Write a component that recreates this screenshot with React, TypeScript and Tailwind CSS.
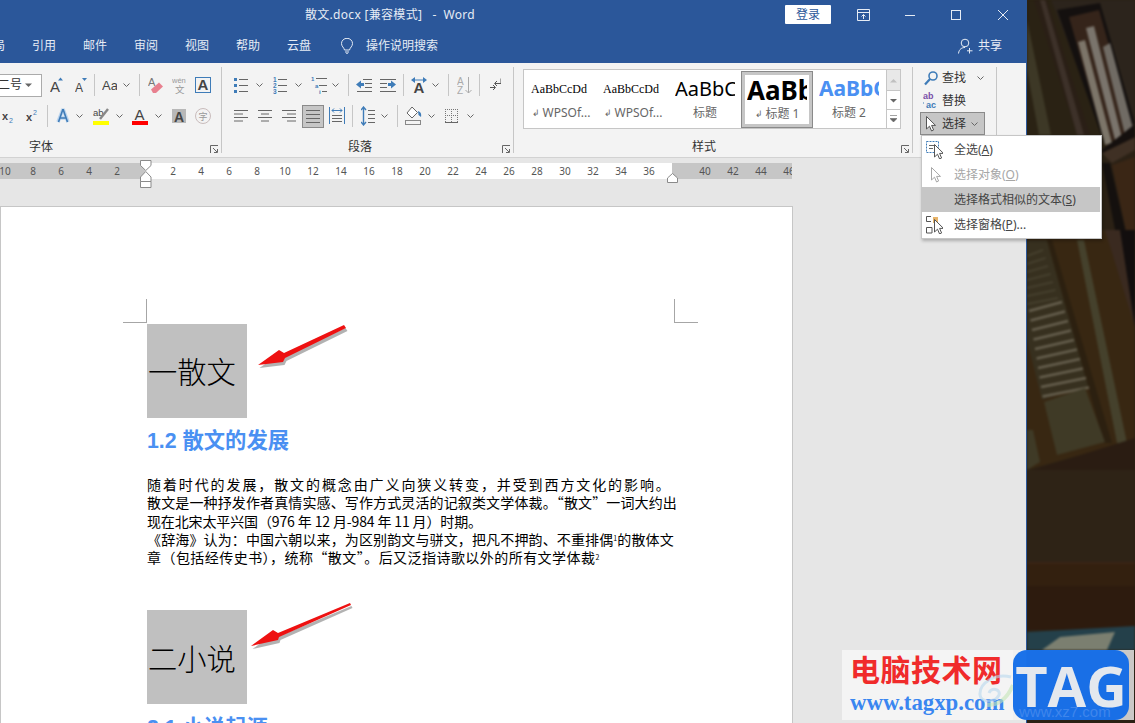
import type { ReactNode } from "react"

function Ic({ w, h = 20, cls = "", children }: { w: number; h?: number; cls?: string; children?: ReactNode }) {
  return (
    <svg width={w} height={h} viewBox={`0 0 ${w} ${h}`} className={`shrink-0 ${cls}`} fill="none">
      {children}
    </svg>
  )
}

function T({ x, y, s, f = "#444", b = false, ff = "Liberation Sans", children }: { x: number; y: number; s: number; f?: string; b?: boolean; ff?: string; children: ReactNode }) {
  return (
    <text x={x} y={y} fontSize={s} fill={f} fontWeight={b ? 700 : 400} fontFamily={`${ff}, Noto Sans CJK SC, sans-serif`}>
      {children}
    </text>
  )
}

const BLUE = "#3f7cb8"

function Chev({ cls = "" }: { cls?: string }) {
  return (
    <Ic w={7} h={20} cls={cls}>
      <path d="M0.5 8.5 3.5 11.5 6.5 8.5" stroke="#666" />
    </Ic>
  )
}

function Sep({ cls = "" }: { cls?: string }) {
  return <div className={`h-[22px] w-px shrink-0 bg-[#c6c6c6] ${cls}`} />
}

function Lines({ w, ys, x = 0, cls = "" }: { w: number; ys: number[]; x?: number; cls?: string }) {
  return (
    <Ic w={w} cls={cls}>
      {ys.map((y) => (
        <path key={y} d={`M${x} ${y + 0.5}H${w}`} stroke="#666" />
      ))}
    </Ic>
  )
}

function AlignIcon({ kind, cls = "" }: { kind: "l" | "c" | "r"; cls?: string }) {
  const rows: [number, number][] =
    kind === "l"
      ? [[0, 14], [0, 9], [0, 14], [0, 9]]
      : kind === "c"
        ? [[0, 14], [3, 11], [0, 14], [3, 11]]
        : [[0, 14], [5, 14], [0, 14], [5, 14]]
  return (
    <Ic w={14} cls={cls}>
      {rows.map((r, i) => (
        <path key={i} d={`M${r[0]} ${4.5 + i * 3.5}H${r[1]}`} stroke="#666" />
      ))}
    </Ic>
  )
}

function Cursor({ x = 0, y = 0, f = "#fff", s = "#555" }: { x?: number; y?: number; f?: string; s?: string }) {
  return <path transform={`translate(${x} ${y})`} d="M0.5 0.5V13L3.5 10.2 5.6 15 7.6 14 5.6 9.4H9.5Z" fill={f} stroke={s} />
}

function Launcher() {
  return (
    <Ic w={8} h={8}>
      <path d="M0.5 8V0.5H8M3 3 7 7M7.5 4V7.5H4" stroke="#666" />
    </Ic>
  )
}

function FontGroup() {
  return (
    <div className="flex w-[221px] shrink-0 flex-col overflow-hidden">
      <div className="mt-[10px] flex h-[24px] items-center">
        <div className="ml-[-10px] flex h-[23px] w-[52px] shrink-0 items-center border border-[#ababab] bg-white pl-[7px] text-[12px] text-[#333]">
          二号
          <Ic w={7} h={6} cls="ml-[3px]">
            <path d="M0 1.5H7L3.5 5Z" fill="#666" />
          </Ic>
        </div>
        <Ic w={13} cls="ml-[8px]">
          <T x={0} y={17} s={15}>A</T>
          <path d="M8 5.5 10.5 2.5 13 5.5Z" fill={BLUE} />
        </Ic>
        <Ic w={12} cls="ml-[12px]">
          <T x={0} y={17} s={12}>A</T>
          <path d="M7 3H12L9.5 6Z" fill={BLUE} />
        </Ic>
        <Sep cls="ml-[7px]" />
        <Ic w={15} cls="ml-[7px]">
          <T x={0} y={15} s={13}>Aa</T>
        </Ic>
        <Chev cls="ml-[6px]" />
        <Sep cls="ml-[9px]" />
        <Ic w={15} cls="ml-[8px]">
          <T x={0} y={11} s={11} f="#777">A</T>
          <path d="M3 14.5 11 7.5 15 11.5 8 18H5Z" fill="#e8808f" />
        </Ic>
        <Ic w={15} cls="ml-[9px]">
          <T x={0} y={8} s={7.5} f="#999">wén</T>
          <T x={3} y={18} s={9.5} f="#999">文</T>
        </Ic>
        <Ic w={16} cls="ml-[8px]">
          <rect x={0.5} y={2.5} width={15} height={15} stroke={BLUE} />
          <T x={2.5} y={15} s={15} b>A</T>
        </Ic>
      </div>
      <div className="mt-[7px] flex h-[24px] items-center">
        <Ic w={12} cls="ml-[2px]">
          <T x={0} y={14} s={11} b>x</T>
          <T x={7} y={17} s={7} f={BLUE}>2</T>
        </Ic>
        <Ic w={12} cls="ml-[12px]">
          <T x={0} y={15} s={11} b>x</T>
          <T x={7} y={9} s={7} f={BLUE}>2</T>
        </Ic>
        <Sep cls="ml-[9px]" />
        <Ic w={14} cls="ml-[8px]">
          <path d="M7 3 2 16M7 3 12 16M4 12H10" stroke="#bcd5ee" strokeWidth={3.5} />
          <path d="M7 3 2.5 16M7 3 11.5 16M4 12H10" stroke={BLUE} strokeWidth={1.6} />
        </Ic>
        <Chev cls="ml-[6px]" />
        <Ic w={16} cls="ml-[10px]">
          <T x={0} y={10} s={9.5}>ab</T>
          <path d="M7 13 15 3" stroke="#888" strokeWidth={2.4} />
          <rect x={0} y={15} width={16} height={4} fill="#ffff00" />
        </Ic>
        <Chev cls="ml-[7px]" />
        <Ic w={16} cls="ml-[9px]">
          <T x={2.5} y={14} s={15}>A</T>
          <rect x={0} y={15} width={16} height={4} fill="#f00" />
        </Ic>
        <Chev cls="ml-[7px]" />
        <Ic w={14} cls="ml-[10px]">
          <rect x={0} y={3} width={14} height={14} fill="#b8b8b8" />
          <T x={2} y={15.5} s={14} b>A</T>
        </Ic>
        <Ic w={16} cls="ml-[9px]">
          <circle cx={8} cy={10} r={7.5} stroke="#c9bcbc" />
          <T x={3.5} y={14} s={9} f="#999">字</T>
        </Ic>
      </div>
      <div className="relative mt-auto flex h-[20px] items-center">
        <span className="ml-[29px] text-[12px] text-[#333]">字体</span>
        <div className="absolute left-[210px] top-[8px]">
          <Launcher />
        </div>
      </div>
    </div>
  )
}

function ParagraphGroup() {
  return (
    <div className="flex w-[291px] shrink-0 flex-col">
      <div className="mt-[10px] flex h-[24px] items-center">
        <Ic w={14} cls="ml-[12px]">
          <path d="M5 4.5H14M5 10.5H14M5 16.5H14" stroke="#666" />
          <path d="M0 3h3v3H0zM0 9h3v3H0zM0 15h3v3H0z" fill={BLUE} />
        </Ic>
        <Chev cls="ml-[8px]" />
        <Ic w={14} cls="ml-[10px]">
          <path d="M5 4.5H14M5 10.5H14M5 16.5H14" stroke="#666" />
          <T x={0} y={7} s={6.5} f={BLUE} b>1</T>
          <T x={0} y={13} s={6.5} f={BLUE} b>2</T>
          <T x={0} y={19} s={6.5} f={BLUE} b>3</T>
        </Ic>
        <Chev cls="ml-[8px]" />
        <Ic w={16} cls="ml-[9px]">
          <path d="M5 3.5H16M8 10.5H16M11 16.5H16" stroke="#666" />
          <T x={0} y={6} s={6} f={BLUE} b>1</T>
          <T x={4} y={12.5} s={6} f={BLUE} b>a</T>
          <T x={8} y={19} s={6} f={BLUE} b>i</T>
        </Ic>
        <Chev cls="ml-[5px]" />
        <Sep cls="ml-[9px]" />
        <Ic w={16} cls="ml-[7px]">
          <path d="M7 4.5H16M9 8.5H16M9 12.5H16M1 16.5H16" stroke="#666" />
          <path d="M0 9.5 5 5.5V8H8V11H5V13.5Z" fill={BLUE} />
        </Ic>
        <Ic w={16} cls="ml-[8px]">
          <path d="M0 4.5H16M0 8.5H7M0 12.5H7M0 16.5H16" stroke="#666" />
          <path d="M16 9.5 11 5.5V8H8V11H11V13.5Z" fill={BLUE} />
        </Ic>
        <Sep cls="ml-[7px]" />
        <Ic w={16} cls="ml-[7px]">
          <T x={2.5} y={18} s={15} b>A</T>
          <path d="M0 5 4 2V8ZM16 5 12 2V8Z" fill={BLUE} />
          <path d="M4 5H12" stroke={BLUE} />
        </Ic>
        <Chev cls="ml-[5px]" />
        <Sep cls="ml-[9px]" />
        <Ic w={15} cls="ml-[8px]">
          <T x={0} y={10} s={10} f="#aaa">A</T>
          <T x={0} y={19} s={10} f="#aaa">Z</T>
          <path d="M11.5 2V18M8.5 15 11.5 18 14.5 15" stroke="#aaa" />
        </Ic>
        <Sep cls="ml-[7px]" />
        <Ic w={11} cls="ml-[10px]">
          <path d="M11 3.5V8.5H5M7 6 4.5 8.5 7 11" stroke="#555" />
          <path d="M0 12.5H5M3 10 5.5 12.5 3 15" stroke="#555" />
        </Ic>
      </div>
      <div className="mt-[7px] flex h-[24px] items-center">
        <AlignIcon kind="l" cls="ml-[12px]" />
        <AlignIcon kind="c" cls="ml-[10px]" />
        <AlignIcon kind="r" cls="ml-[10px]" />
        <div className="ml-[6px] flex h-[23px] w-[22px] shrink-0 items-center justify-center border border-[#8a8a8a] bg-[#c6c6c6]">
          <Lines w={14} ys={[4, 8, 12, 16]} />
        </div>
        <Ic w={16} cls="ml-[5px]">
          <path d="M0.5 1V18M15.5 1V18" stroke={BLUE} />
          <path d="M3 4.5H13M5 2.5 3 4.5 5 6.5M11 2.5 13 4.5 11 6.5" stroke={BLUE} />
          <path d="M3 9.5H13M3 12.5H13M3 15.5H13" stroke="#666" />
        </Ic>
        <Sep cls="ml-[7px]" />
        <Ic w={14} cls="ml-[8px]">
          <path d="M7 4.5H14M7 8.5H14M7 12.5H14M7 16.5H14" stroke="#666" />
          <path d="M2.5 1V19M0 4 2.5 1 5 4M0 16 2.5 19 5 16" stroke={BLUE} strokeWidth={1.4} />
        </Ic>
        <Chev cls="ml-[6px]" />
        <Sep cls="ml-[9px]" />
        <Ic w={17} cls="ml-[7px]">
          <path d="M7 1 12.5 6.5 7 12 2 7Z" fill="#fff" stroke="#666" />
          <path d="M13 5C16 6 16.500 8 16 11L13.500 9Z" fill={BLUE} />
          <rect x={0.5} y={14.5} width={15} height={4} stroke="#888" fill="#f3f3f3" />
        </Ic>
        <Chev cls="ml-[6px]" />
        <Ic w={13} cls="ml-[10px]">
          <path d="M0.5 3V16M6.500 3V16M12.500 3V16M0 3.500H13M0 9.500H13" stroke="#777" strokeDasharray="1 1" />
          <path d="M0 16.500H13" stroke="#666" />
        </Ic>
        <Chev cls="ml-[9px]" />
      </div>
      <div className="relative mt-auto flex h-[20px] items-center">
        <span className="ml-[126px] text-[12px] text-[#333]">段落</span>
        <div className="absolute left-[280px] top-[8px]">
          <Launcher />
        </div>
      </div>
    </div>
  )
}

function StyleItem({ name, mark, active, children }: { name: string; mark?: boolean; active?: boolean; children: ReactNode }) {
  return (
    <div className={`flex h-[57px] w-[72px] shrink-0 flex-col items-center overflow-hidden ${active ? "border border-[#8a8a8a] outline-[3px] outline-[#c6c6c6] -outline-offset-4" : ""}`}>
      <div className="flex h-[33px] w-[60px] items-center overflow-hidden whitespace-nowrap pt-[3px]">{children}</div>
      <div className="flex h-[18px] items-center whitespace-nowrap text-[12px] leading-none text-[#666]">
        {mark && <span className="mr-[3px] text-[9px]">↲</span>}
        {name}
      </div>
    </div>
  )
}

function StylesGroup() {
  return (
    <div className="relative flex w-[398px] shrink-0 flex-col">
      <div className="ml-[9px] mt-[6px] flex h-[60px] w-[378px] border border-[#c6c6c6] bg-white">
        <div className="flex flex-1 items-center pl-[1px]">
          <StyleItem name="WPSOf..." mark>
            <span className="text-[12px] leading-none text-black [font-family:'Liberation_Serif',serif]">AaBbCcDd</span>
          </StyleItem>
          <StyleItem name="WPSOf..." mark>
            <span className="text-[12px] leading-none text-black [font-family:'Liberation_Serif',serif]">AaBbCcDd</span>
          </StyleItem>
          <StyleItem name="标题">
            <span className="text-[20px] leading-none text-black">AaBbC</span>
          </StyleItem>
          <StyleItem name="标题 1" mark active>
            <span className="text-[26px] font-bold leading-none text-black">AaBb</span>
          </StyleItem>
          <StyleItem name="标题 2">
            <span className="text-[21px] font-bold leading-none text-[#4a90f2]">AaBbC</span>
          </StyleItem>
        </div>
        <div className="flex w-[14px] shrink-0 flex-col border-l border-[#c6c6c6]">
          <div className="flex h-[21px] items-center justify-center border-b border-[#c6c6c6] bg-[#e8e8e8]">
            <Ic w={7} h={5}><path d="M0 4.500H7L3.500 1Z" fill="#c0c0c0" /></Ic>
          </div>
          <div className="flex h-[19px] items-center justify-center border-b border-[#c6c6c6]">
            <Ic w={7} h={5}><path d="M0 1H7L3.500 4.500Z" fill="#666" /></Ic>
          </div>
          <div className="flex flex-1 items-center justify-center">
            <Ic w={7} h={8}><path d="M0 3.500H7L3.500 7ZM0 .5H7" fill="#666" stroke="#666" strokeWidth={0.6} /></Ic>
          </div>
        </div>
      </div>
      <div className="mt-auto flex h-[20px] items-center pr-[18px]">
        <span className="w-full text-center text-[12px] text-[#333]">样式</span>
      </div>
      <div className="absolute left-[387px] top-[82px]">
        <Launcher />
      </div>
    </div>
  )
}

function EditGroup() {
  return (
    <div className="flex w-[83px] shrink-0 flex-col pl-[7px] pt-[3px] text-[12px] text-[#333]">
      <div className="flex h-[23px] items-center">
        <Ic w={14} h={16} cls="ml-[4px]">
          <circle cx={9} cy={6} r={4} stroke="#3f7cb8" strokeWidth={1.6} />
          <path d="M6 9 1 14.500" stroke="#3f7cb8" strokeWidth={2.2} />
        </Ic>
        <span className="ml-[4px]">查找</span>
        <Chev cls="ml-[11px]" />
      </div>
      <div className="flex h-[23px] items-center">
        <Ic w={15} h={17} cls="ml-[3px]">
          <T x={0} y={7} s={9} f="#7a4fa8" b>ab</T>
          <T x={3} y={16} s={9} f={BLUE} b>ac</T>
          <path d="M0 12V10" stroke={BLUE} />
        </Ic>
        <span className="ml-[4px]">替换</span>
      </div>
      <div className="flex h-[23px] w-[65px] items-center border border-[#8a8a8a] bg-[#c6c6c6]">
        <Ic w={10} h={16} cls="ml-[5px]">
          <Cursor />
        </Ic>
        <span className="ml-[6px]">选择</span>
        <Chev cls="ml-[5px]" />
      </div>
    </div>
  )
}

function GroupLine() {
  return <div className="my-[4px] w-px shrink-0 bg-[#c6c6c6]" />
}

function RulerCells({ nums }: { nums: (number | null)[] }) {
  return (
    <>
      {nums.map((n, i) => (
        <span key={i} className="w-[28px] shrink-0 text-center">
          {n}
        </span>
      ))}
    </>
  )
}

function Ruler() {
  return (
    <div className="relative h-[48px] shrink-0 pt-[5px]">
      <div className="flex h-[16px] w-[792px] overflow-hidden text-[10px] leading-[16px] text-[#555]">
        <div className="flex w-[145px] shrink-0 bg-[#c6c6c6] pl-0">
          <div className="ml-[-9px] flex">
            <RulerCells nums={[10, 8, 6, 4, 2]} />
          </div>
        </div>
        <div className="flex w-[527px] shrink-0 bg-white pl-[14px]">
          <RulerCells nums={[2, 4, 6, 8, 10, 12, 14, 16, 18, 20, 22, 24, 26, 28, 30, 32, 34, 36]} />
        </div>
        <div className="flex w-[120px] shrink-0 bg-[#c6c6c6] pl-[19px]">
          <RulerCells nums={[40, 42, 44, 46]} />
        </div>
      </div>
      <svg width={12} height={28} viewBox="0 0 12 28" className="absolute left-[140px] top-[2px]" fill="#fff" stroke="#8a8a8a">
        <path d="M.5.5H11V5.500L5.750 10.500.5 5.500Z" />
        <path d="M5.750 11.500 11 17V21.500H.5V17Z" />
        <path d="M.5 21.500H11V27.500H.5Z" />
      </svg>
      <svg width={12} height={10} viewBox="0 0 12 10" className="absolute left-[667px] top-[15px]" fill="#fff" stroke="#8a8a8a">
        <path d="M5.500.5 10.500 5V9.500H.5V5Z" />
      </svg>
    </div>
  )
}

function Page() {
  return (
    <div className="relative h-[600px] w-[793px] border-x border-t border-[#c6c6c6] bg-white pl-[146px] pt-[117px] text-black [font-family:'Noto_Sans_CJK_SC',sans-serif]">
      <div className="absolute left-[122px] top-[92px] h-[24px] w-[24px] border-b border-r border-[#a6a6a6]" />
      <div className="absolute left-[673px] top-[92px] h-[24px] w-[24px] border-b border-l border-[#a6a6a6]" />
      <div className="flex h-[94px] w-[100px] items-center bg-[#c0c0c0] pl-[1px] text-[29.300px] leading-none whitespace-nowrap font-light">一散文</div>
      <div className="mt-[8px] h-[30px] text-[21.300px] font-bold leading-[30px] text-[#4a90f2] whitespace-nowrap [font-family:'Liberation_Sans','Noto_Sans_CJK_SC',sans-serif]">1.2 散文的发展</div>
      <div className="mt-[19px] text-[14px] leading-[18.300px] whitespace-nowrap">
        <div className="tracking-[1.900px]">随着时代的发展，散文的概念由广义向狭义转变，并受到西方文化的影响。</div>
        <div className="tracking-[0.130px]">散文是一种抒发作者真情实感、写作方式灵活的记叙类文学体裁。“散文”一词大约出</div>
        <div className="tracking-[-0.130px]">现在北宋太平兴国（976 年 12 月-984 年 11 月）时期。</div>
        <div className="tracking-[0.130px]">《辞海》认为：中国六朝以来，为区别韵文与骈文，把凡不押韵、不重排偶<sup className="text-[7px]">1</sup>的散体文</div>
        <div className="tracking-[0.450px]">章（包括经传史书），统称“散文”。后又泛指诗歌以外的所有文学体裁<sup className="text-[7px]">2</sup></div>
      </div>
      <div className="mt-[44px] flex h-[94px] w-[100px] items-center bg-[#c0c0c0] pl-[1px] text-[29.300px] leading-none whitespace-nowrap font-light">二小说</div>
      <div className="mt-[9px] h-[30px] text-[21.300px] font-bold leading-[30px] text-[#4a90f2] whitespace-nowrap [font-family:'Liberation_Sans','Noto_Sans_CJK_SC',sans-serif]">2.1 小说起源</div>
    </div>
  )
}

function Wallpaper() {
  const louvers = Array.from({ length: 10 }, (_, i) => i)
  const dimLouvers = Array.from({ length: 7 }, (_, i) => i)
  return (
    <div className="h-[723px] w-[108px] shrink-0 overflow-hidden bg-[#2c2114]">
      <svg width={108} height={723} viewBox="0 0 108 723" className="blur-[0.8px]">
        <rect width={108} height={723} fill="#2b2115" />
        {/* books on the shelf */}
        <path d="M0 0H30L78 145V240H0Z" fill="#2a2214" />
        <path d="M0 20 24 135H12L0 70Z" fill="#3d3826" />
        <path d="M7 0H20L63 135H50Z" fill="#2a1f16" />
        <path d="M13 0H18L57 135H50Z" fill="#3d3129" />
        <path d="M24 0H72L108 0V135H78Z" fill="#2c241c" />
        <path d="M30 10 73 3 108 123 77 143Z" fill="#14100f" />
        <path d="M42 17 72 10 107 133 78 143Z" fill="#35241a" />
        <path d="M51 42 58 40 85 143 78 145Z" fill="#7c7569" />
        <path d="M59 28 67 26 95 138 88 140Z" fill="#7a746c" />
        <path d="M76 47 83 43 107 132 98 135Z" fill="#706b64" />
        <path d="M75 153 108 137V150L85 163Z" fill="#3f3024" />
        <path d="M75 150 108 124V137L75 153Z" fill="#15100e" />
        <path d="M75 163H83L103 250H92Z" fill="#14100e" />
        <path d="M85 165 108 157V250H103Z" fill="#3a2615" />
        {/* louvre door and frame */}
        <path d="M0 230H108V440L0 470Z" fill="#382712" />
        <path d="M0 240H20L62 386 15 400 0 340Z" fill="#37301f" />
        <path d="M50 240H57L100 443H90Z" fill="#45412c" />
        <path d="M20 240H25L85 443H77Z" fill="#2c2010" />
        <path d="M78 230H93L108 287V327Z" fill="#3a2a20" />
        <path d="M93 230H108V327Z" fill="#120e0e" />
        {dimLouvers.map((i) => (
          <path key={i} d={`M0 ${256 + i * 8}L${16 + i * 2.5} ${250 + i * 8}`} stroke="#4a4432" strokeWidth={1.500} />
        ))}
        {louvers.map((i) => (
          <path key={i} d={`M${2 + i * 1.500} ${311 + i * 9.500}L${35 + i * 3} ${302 + i * 9.500}`} stroke="#665f4e" strokeWidth={2.500} />
        ))}
        <path d="M17 402 58 388 78 442 30 455Z" fill="#3f3a26" />
        <path d="M0 430H6L13 462 0 470Z" fill="#3f3a26" />
        <path d="M0 472 108 438V470H0Z" fill="#2a1c12" />
        {/* floor */}
        <rect y={470} width={108} height={160} fill="#2e2316" />
        <rect y={562} width={108} height={2} fill="#3a2415" />
        <rect y={564} width={108} height={22} fill="#33200f" />
        <rect y={586} width={108} height={44} fill="#2d1b0e" />
        <path d="M0 632 108 626V650H0Z" fill="#24404a" />
        <path d="M15 650 33 637 88 632 80 650Z" fill="#7b7f70" />
      </svg>
    </div>
  )
}

function Menu() {
  return (
    <div className="absolute left-[921px] top-[135px] h-[104px] w-[181px] border border-[#c6c6c6] bg-white py-px text-[12px] text-[#444] shadow-[1px_2px_3px_rgba(0,0,0,0.25)]">
      <div className="flex h-[25px] items-center">
        <Ic w={17} h={18} cls="ml-[4px]">
          <rect x={0.5} y={0.5} width={12} height={11} stroke={BLUE} strokeDasharray="2 1" />
          <path d="M3 4.500H9M3 7.500H7" stroke="#666" />
          <Cursor x={8} y={3} />
        </Ic>
        <span className="ml-[11px]">全选(<u>A</u>)</span>
      </div>
      <div className="flex h-[25px] items-center text-[#a6a6a6]">
        <Ic w={10} h={16} cls="ml-[9px]">
          <Cursor s="#a6a6a6" />
        </Ic>
        <span className="ml-[13px]">选择对象(<u>O</u>)</span>
      </div>
      <div className="flex h-[25px] w-[178px] items-center bg-[#c6c6c6] pl-[32px]">选择格式相似的文本(<u>S</u>)</div>
      <div className="flex h-[25px] items-center">
        <Ic w={17} h={18} cls="ml-[4px]">
          <path d="M5 .5H.5V5.500H5M.5 11.500H6V17H.5Z" stroke="#555" />
          <rect x={7} y={1} width={5} height={6} fill="#e8b46a" />
          <Cursor x={8} y={3} />
        </Ic>
        <span className="ml-[11px]">选择窗格(<u>P</u>)...</span>
      </div>
    </div>
  )
}

function Watermark() {
  return (
    <div className="absolute left-[842px] top-[650px] flex h-[70px] w-[292px] bg-[#f3f3f3]/80">
      <div className="relative w-[171px] shrink-0 bg-[#f4f4f4] pl-[8px] pt-[2px]">
        <div className="text-[30px] font-bold leading-[36px] tracking-[0.500px] text-[#f02b2b] whitespace-nowrap">电脑技术网</div>
        <div className="mt-[3px] text-[22.800px] font-bold leading-[24px] text-[#3a86f0] [font-family:'Liberation_Serif',serif] whitespace-nowrap">www.tagxp.com</div>
        <svg width={36} height={34} viewBox="0 0 36 34" className="absolute left-[135px] top-[23px] opacity-60" fill="none">
          <path d="M34 4C18 0 2 10 3 22 4 30 18 30 22 22 24 16 14 14 12 20" stroke="#b9d8ee" strokeWidth={3} />
          <path d="M36 12C30 26 22 32 10 32" stroke="#c5e6b8" strokeWidth={4} />
        </svg>
      </div>
      <div className="absolute left-[171px] top-0 flex h-[70px] w-[116px] items-center justify-center overflow-hidden rounded-[14px] bg-[#0f6ae8]/95 text-[56px] font-bold leading-none text-[#e4e8ee] [font-family:'Open_Sans','Liberation_Sans',sans-serif]">
        TAG
        <span className="absolute bottom-[1px] left-[6px] text-[15px] font-normal leading-none text-[#3f86ec] [font-family:'Liberation_Sans',sans-serif] whitespace-nowrap">www.xz7.com</span>
      </div>
    </div>
  )
}

export default function App() {
  return (
    <div className="relative flex h-[723px] w-[1135px] overflow-hidden [font-family:'Noto_Sans','Noto_Sans_CJK_SC',sans-serif]">
      <div className="flex w-[1027px] shrink-0 flex-col overflow-hidden border-r border-[#2b579a] bg-[#e6e6e6]">
        {/* title bar */}
        <div className="flex h-[29px] shrink-0 items-center bg-[#2b579a] text-[12px] text-[#e6ecf5]">
          <span className="ml-[305px] whitespace-pre tracking-[0.300px]">散文.docx [兼容模式]   -  Word</span>
          <div className="ml-auto flex items-center pr-[18px]">
            <div className="flex h-[19px] w-[46px] items-center justify-center rounded-[1px] bg-white text-[#2b579a]">登录</div>
            <Ic w={13} h={12} cls="ml-[26px]">
              <path d="M.5.5H12.500V11.500H.5ZM.5 3.500H12.500M6.500 10V5.500M4.500 7.500 6.500 5.500 8.500 7.500" stroke="#e6ecf5" />
            </Ic>
            <Ic w={10} h={12} cls="ml-[35px]">
              <path d="M0 6.500H10" stroke="#e6ecf5" />
            </Ic>
            <Ic w={10} h={12} cls="ml-[36px]">
              <rect x={0.5} y={1.500} width={9} height={9} stroke="#e6ecf5" />
            </Ic>
            <Ic w={10} h={12} cls="ml-[37px]">
              <path d="M0 1 10 11M10 1 0 11" stroke="#e6ecf5" />
            </Ic>
          </div>
        </div>
        {/* tabs */}
        <div className="flex h-[34px] shrink-0 items-center gap-[27px] bg-[#2b579a] text-[12px] text-[#e6ecf5]">
          <span className="ml-[-7px]">局</span>
          <span>引用</span>
          <span>邮件</span>
          <span>审阅</span>
          <span>视图</span>
          <span>帮助</span>
          <span>云盘</span>
          <div className="ml-[3px] flex items-center">
            <Ic w={12} h={16}>
              <path d="M3.500 12C3 9.500.5 8.500.5 5.500a5.500 5.200 0 0 1 11 0C11.500 8.500 9 9.500 8.500 12ZM4 14H8M5 15.800H7" stroke="#e6ecf5" />
            </Ic>
            <span className="ml-[13px]">操作说明搜索</span>
          </div>
          <div className="ml-auto flex items-center pr-[24px]">
            <Ic w={15} h={16}>
              <circle cx={7} cy={5} r={3.800} stroke="#e6ecf5" />
              <path d="M.5 15.500C1 11 4 9.500 7 9.500M11.500 10V15.500M9 12.800H14.500" stroke="#e6ecf5" />
            </Ic>
            <span className="ml-[5px]">共享</span>
          </div>
        </div>
        {/* ribbon */}
        <div className="flex h-[95px] shrink-0 border-b border-[#d2d2d2] bg-[#f3f3f3]">
          <FontGroup />
          <GroupLine />
          <ParagraphGroup />
          <GroupLine />
          <StylesGroup />
          <GroupLine />
          <EditGroup />
          <GroupLine />
        </div>
        <Ruler />
        <Page />
      </div>
      <Wallpaper />
      {/* red callout arrows drawn over the document */}
      <svg width={1135} height={723} viewBox="0 0 1135 723" className="pointer-events-none absolute left-0 top-0">
        <path d="M344 325 284 353 279 350 258 365 283 362 285 358 346 328Z" fill="#000" opacity={0.3} transform="translate(1.500 3)" />
        <path d="M344 325 284 353 279 350 258 365 283 362 285 358 346 328Z" fill="#ee1111" />
        <path d="M350 603 278 633 273 630 251 646 278 640 279 637 351 605Z" fill="#000" opacity={0.3} transform="translate(1.500 3)" />
        <path d="M350 603 278 633 273 630 251 646 278 640 279 637 351 605Z" fill="#ee1111" />
      </svg>
      <Menu />
      <Watermark />
    </div>
  )
}
